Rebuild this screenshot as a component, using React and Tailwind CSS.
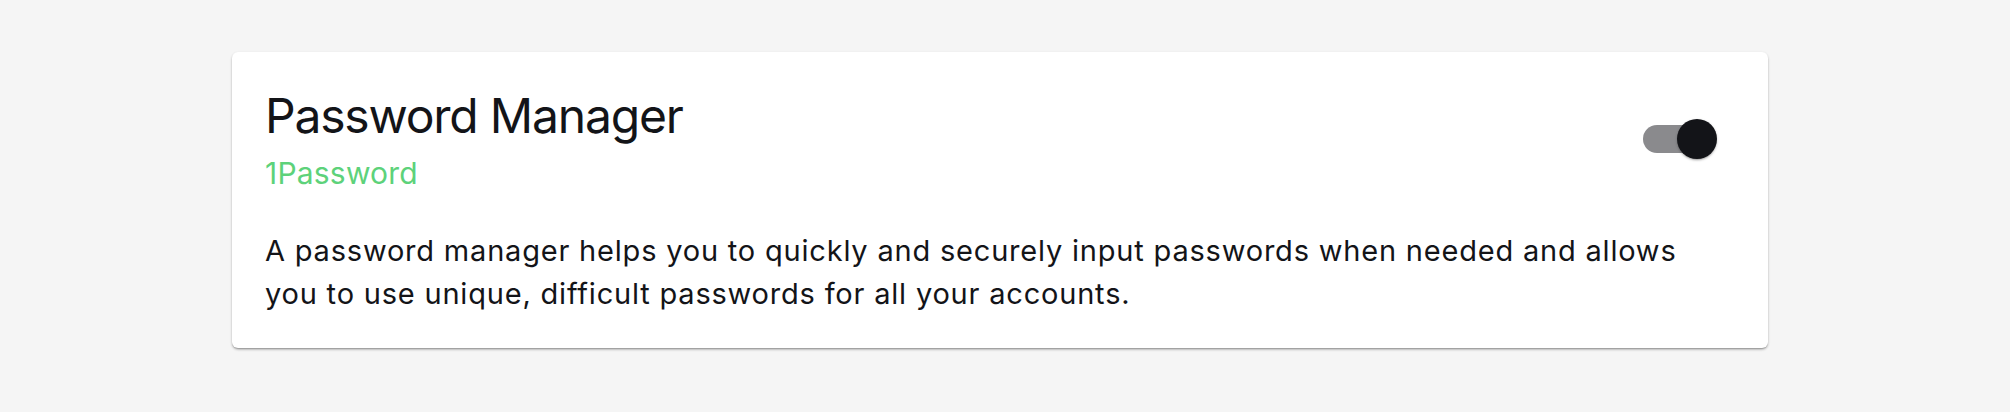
import React, { useState } from 'react';

function Toggle({ checked, onChange }) {
  return (
    <button
      type="button"
      onClick={() => onChange(!checked)}
      className="relative w-[116px] h-[76px] shrink-0"
      aria-pressed={checked}
    >
      <span
        className={`absolute left-[24px] top-[24px] w-[68px] h-[28px] rounded-full ${checked ? 'bg-[#8a8a8d]' : 'bg-[#bdbdbd]'}`}
      />
      <span
        className={`absolute top-[18px] w-[40px] h-[40px] rounded-full shadow-[0_2px_2px_-1px_rgba(0,0,0,0.25),0_1px_3px_rgba(0,0,0,0.2)] ${checked ? 'left-[58px] bg-[#131418]' : 'left-[18px] bg-white'}`}
      />
    </button>
  );
}

export default function App() {
  const [enabled, setEnabled] = useState(true);

  return (
    <div className="min-h-[412px] bg-[#f5f5f5] pt-[52px] pl-[232px] font-['Inter',sans-serif] text-[#131418]">
      <div className="w-[1536px] bg-white rounded-[6px] shadow-[0_2px_3px_-1px_rgba(0,0,0,0.35),0_1px_3px_rgba(0,0,0,0.12),0_1px_1px_rgba(0,0,0,0.08)] pl-[33px] pr-[33px] pt-[35px] pb-[33px]">
        {/* Header */}
        <div className="flex items-center justify-between">
          <div>
            <h2 className="text-[48px] leading-[1.2] font-normal tracking-[-1.2px]">Password Manager</h2>
            <p className="mt-[10px] text-[30px] leading-[1.2] tracking-[0.2px] text-[#5dd27a]">1Password</p>
          </div>
          <Toggle checked={enabled} onChange={setEnabled} />
        </div>

        {/* Description */}
        <p className="mt-[38px] max-w-[1440px] text-[29px] leading-[43px] tracking-[0.8px]">
          A password manager helps you to quickly and securely input passwords when needed and allows you to use unique, difficult passwords for all your accounts.
        </p>
      </div>
    </div>
  );
}
